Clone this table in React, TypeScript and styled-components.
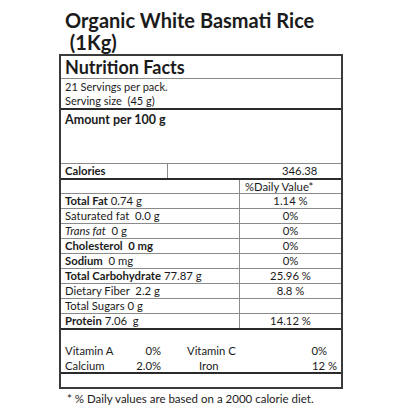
import React from 'react';
import styled, { createGlobalStyle } from 'styled-components';

const GlobalStyle = createGlobalStyle`
  *, *::before, *::after {
    box-sizing: border-box;
  }
  html, body {
    margin: 0;
    padding: 0;
    background: #ffffff;
  }
  body {
    font-family: Lato, "Open Sans", "Liberation Sans", sans-serif;
    color: #1b1b1b;
  }
`;

const Page = styled.div`
  width: 416px;
  height: 416px;
  padding: 9px 0 0 59px;
  display: flex;
  flex-direction: column;
`;

const Title = styled.h1`
  margin: 0 0 1px 6px;
  font-size: 20px;
  line-height: 22px;
  font-weight: 700;
  white-space: pre;
`;

const Label = styled.div`
  width: 284px;
  border: 2px solid #3a3a3a;
  display: flex;
  flex-direction: column;
`;

const Header = styled.div`
  height: 23px;
  padding-left: 4px;
  font-size: 18px;
  line-height: 22px;
  font-weight: 700;
  border-bottom: 1px solid #8a8a8a;
`;

const Serving = styled.div`
  height: 29px;
  padding: 1px 0 0 4px;
  font-size: 11px;
  line-height: 14px;
`;

const Amount = styled.div`
  height: 55px;
  border-top: 2px solid #2a2a2a;
  padding: 2px 0 0 4px;
  font-size: 12.5px;
  line-height: 16px;
  font-weight: 700;
`;

const Row = styled.div<{ $cols: string; $thick?: boolean }>`
  display: grid;
  grid-template-columns: ${(p) => p.$cols};
  height: 15px;
  border-top: ${(p) => (p.$thick ? '2px solid #2a2a2a' : '1px solid #8a8a8a')};
  font-size: 11.3px;
  line-height: 14px;
`;

const Name = styled.div`
  padding-left: 4px;
  white-space: pre;
  b {
    font-weight: 700;
  }
  i {
    font-style: italic;
  }
`;

const Value = styled.div<{ $align?: string; $pad?: number }>`
  border-left: 1px solid #8a8a8a;
  text-align: ${(p) => p.$align ?? 'center'};
  padding-left: ${(p) => p.$pad ?? 0}px;
  white-space: pre;
`;

const Vitamins = styled.div`
  border-top: 2px solid #2a2a2a;
  height: 44px;
  padding: 13px 0 0 4px;
  display: flex;
  flex-direction: column;
  font-size: 11.3px;
  line-height: 15px;
`;

const VitRow = styled.div`
  display: grid;
  grid-template-columns: 60px 36px 1fr auto;
`;

const VitName = styled.span<{ $indent?: number }>`
  padding-left: ${(p) => p.$indent ?? 0}px;
`;

const VitValue = styled.span<{ $right?: number }>`
  text-align: right;
  padding-right: ${(p) => p.$right ?? 0}px;
  white-space: pre;
`;

const Blank = styled.div`
  border-top: 2px solid #2a2a2a;
  height: 15px;
`;

const Footnote = styled.p`
  margin: 2px 0 0 8px;
  font-size: 11.5px;
  line-height: 15px;
`;

const nutrients: { name: React.ReactNode; value: string }[] = [
  { name: <><b>Total Fat</b> 0.74 g</>, value: '1.14 %' },
  { name: 'Saturated fat  0.0 g', value: '0%' },
  { name: <><i>Trans fat</i>  0 g</>, value: '0%' },
  { name: <b>Cholesterol  0 mg</b>, value: '0%' },
  { name: <><b>Sodium</b>  0 mg</>, value: '0%' },
  { name: <><b>Total Carbohydrate</b> 77.87 g</>, value: '25.96 %' },
  { name: 'Dietary Fiber  2.2 g', value: '8.8 %' },
  { name: 'Total Sugars 0 g', value: '' },
  { name: <><b>Protein</b> 7.06  g</>, value: '14.12 %' },
];

const App = () => {
  return (
    <>
      <GlobalStyle />
      <Page>
        <Title>{'Organic White Basmati Rice\n (1Kg)'}</Title>
        <Label>
          <Header>Nutrition Facts</Header>
          <Serving>
            21 Servings per pack.
            <br />
            Serving size&nbsp; (45 g)
          </Serving>
          <Amount>Amount per 100 g</Amount>
          <Row $cols="106px 1fr">
            <Name>
              <b>Calories</b>
            </Name>
            <Value $align="left" $pad={114}>
              346.38
            </Value>
          </Row>
          <Row $cols="178px 1fr" $thick>
            <Name />
            <Value $align="left" $pad={5}>
              %Daily Value*
            </Value>
          </Row>
          {nutrients.map((n, i) => (
            <Row key={i} $cols="178px 1fr">
              <Name>{n.name}</Name>
              <Value>{n.value}</Value>
            </Row>
          ))}
          <Vitamins>
            <VitRow>
              <span>Vitamin A</span>
              <VitValue>0%</VitValue>
              <VitName $indent={26}>Vitamin C</VitName>
              <VitValue $right={14}>0%</VitValue>
            </VitRow>
            <VitRow>
              <span>Calcium</span>
              <VitValue>2.0%</VitValue>
              <VitName $indent={38}>Iron</VitName>
              <VitValue $right={4}>12 %</VitValue>
            </VitRow>
          </Vitamins>
          <Blank />
        </Label>
        <Footnote>* % Daily values are based on a 2000 calorie diet.</Footnote>
      </Page>
    </>
  );
};

export default App;
